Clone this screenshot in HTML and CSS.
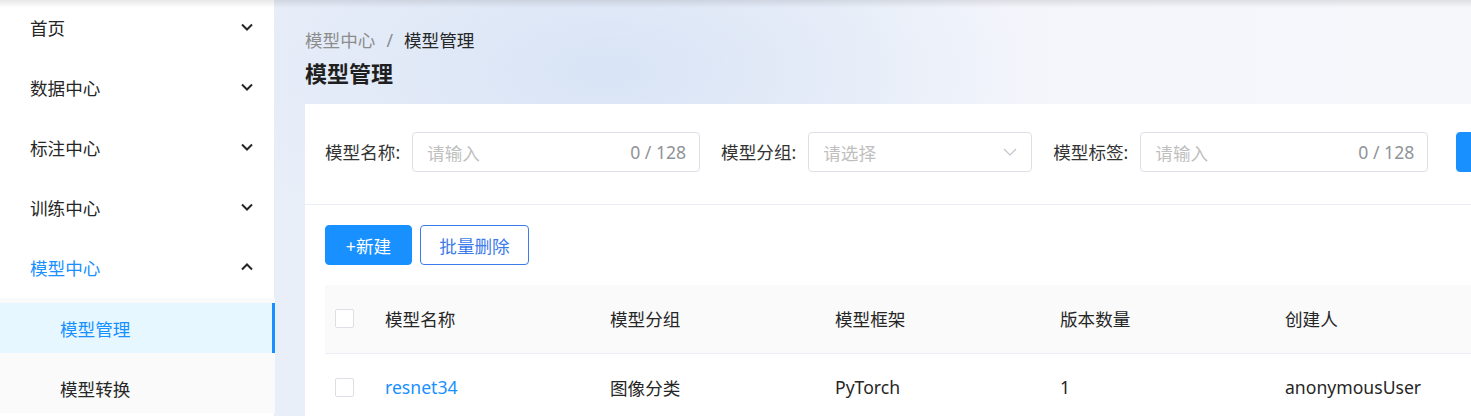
FILE: index.html
```html
<!DOCTYPE html>
<html lang="zh-CN">
<head>
<meta charset="utf-8">
<title>模型管理</title>
<link rel="stylesheet" href="styles.css">
</head>
<body>
<div class="topshadow"></div>
<div class="layout">
  <aside class="sider">
    <ul class="menu">
      <li class="menu-item"><span>首页</span><svg class="chev" viewBox="0 0 12 8"><path d="M1 1.5 6 6.5 11 1.5"/></svg></li>
      <li class="menu-item"><span>数据中心</span><svg class="chev" viewBox="0 0 12 8"><path d="M1 1.5 6 6.5 11 1.5"/></svg></li>
      <li class="menu-item"><span>标注中心</span><svg class="chev" viewBox="0 0 12 8"><path d="M1 1.5 6 6.5 11 1.5"/></svg></li>
      <li class="menu-item"><span>训练中心</span><svg class="chev" viewBox="0 0 12 8"><path d="M1 1.5 6 6.5 11 1.5"/></svg></li>
      <li class="menu-item open"><span>模型中心</span><svg class="chev" viewBox="0 0 12 8"><path d="M1 6.5 6 1.5 11 6.5"/></svg></li>
      <li class="submenu">
        <div class="sub-item active">模型管理</div>
        <div class="sub-item">模型转换</div>
      </li>
    </ul>
  </aside>
  <main class="main">
    <div class="breadcrumb"><span class="crumb-link">模型中心</span><span class="sep">/</span><span class="crumb-cur">模型管理</span></div>
    <h1 class="title">模型管理</h1>
    <section class="card">
      <div class="filters">
        <label class="flabel">模型名称:</label>
        <div class="input w288"><span class="ph">请输入</span><span class="count">0 / 128</span></div>
        <label class="flabel">模型分组:</label>
        <div class="input w224"><span class="ph">请选择</span><svg class="sel-arrow" viewBox="0 0 14 8"><path d="M1 1 7 7 13 1"/></svg></div>
        <label class="flabel">模型标签:</label>
        <div class="input w288"><span class="ph">请输入</span><span class="count">0 / 128</span></div>
        <button class="btn primary search" aria-label="查询"></button>
      </div>
      <div class="content">
        <div class="actions">
          <button class="btn primary new">+新建</button>
          <button class="btn outline">批量删除</button>
        </div>
        <table class="table">
          <thead>
            <tr>
              <th class="c-check"><span class="checkbox"></span></th>
              <th>模型名称</th>
              <th>模型分组</th>
              <th>模型框架</th>
              <th>版本数量</th>
              <th>创建人</th>
            </tr>
          </thead>
          <tbody>
            <tr>
              <td class="c-check"><span class="checkbox"></span></td>
              <td><a class="link">resnet34</a></td>
              <td>图像分类</td>
              <td>PyTorch</td>
              <td>1</td>
              <td>anonymousUser</td>
            </tr>
          </tbody>
        </table>
      </div>
    </section>
  </main>
</div>
</body>
</html>
```

FILE: styles.css
```css
* { box-sizing: border-box; }
html, body {
  margin: 0;
  padding: 0;
  width: 1471px;
  height: 416px;
  overflow: hidden;
  font-family: "Noto Sans", "Noto Sans CJK SC", sans-serif;
  font-size: 17.6px;
  color: #262626;
  background: #f5f7fb;
}
.topshadow {
  position: fixed;
  left: 0; top: 0; right: 0;
  height: 8px;
  background: linear-gradient(to bottom, rgba(0,0,0,0.09), rgba(0,0,0,0));
  z-index: 10;
  pointer-events: none;
}
.layout {
  display: flex;
  height: 416px;
}
.sider {
  flex: 0 0 275px;
  width: 275px;
  background: #fff;
  border-right: 1px solid #ececec;
  position: relative;
}
.menu {
  list-style: none;
  margin: -2px 0 0 0;
  padding: 0;
}
.menu-item {
  height: 60px;
  display: flex;
  align-items: center;
  justify-content: space-between;
  padding: 0 21px 0 30px;
  line-height: 26px;
  color: #262626;
}
.menu-item.open { color: #1890ff; }
.chev {
  width: 12px;
  height: 8px;
  fill: none;
  stroke: #262626;
  stroke-width: 2;
  margin-top: -2px;
}
.submenu {
  background: #fafafa;
  padding-top: 5px;
  margin-right: -1px;
}
.sub-item {
  height: 50px;
  margin-bottom: 10px;
  display: flex;
  align-items: center;
  padding-left: 60px;
  color: #262626;
  position: relative;
}
.sub-item.active {
  background: #e6f7ff;
  color: #1890ff;
}
.sub-item.active::after {
  content: "";
  position: absolute;
  right: 0;
  top: 0;
  bottom: 0;
  width: 3px;
  background: #1890ff;
}
.main {
  flex: 1 0 auto;
  min-width: 1250px;
  padding: 27px 0 0 30px;
  background:
    radial-gradient(ellipse 420px 200px at 330px 70px, rgba(214,226,245,0.9), rgba(214,226,245,0) 100%),
    linear-gradient(to right, #e9eff9 0%, #eef2fa 30%, #f4f6fb 60%, #f6f8fc 100%);
}
.breadcrumb {
  line-height: 26px;
  color: #262626;
}
.crumb-link { color: #8c8c8c; }
.sep { color: #8c8c8c; margin: 0 11px; }
.title {
  margin: 5px 0 0 0;
  font-size: 22px;
  font-weight: 700;
  line-height: 30px;
  color: #1f1f1f;
}
.card {
  margin-top: 16px;
  background: #fff;
  width: 1400px;
}
.filters {
  display: flex;
  align-items: center;
  padding: 28px 20px 32px 20px;
  border-bottom: 1px solid #ebeef5;
}
.flabel {
  color: #333;
  margin-right: 12px;
  line-height: 26px;
  white-space: nowrap;
}
.input {
  flex: 0 0 auto;
  height: 40px;
  border: 1px solid #dcdfe6;
  border-radius: 4px;
  display: flex;
  align-items: center;
  justify-content: space-between;
  padding: 0 13px 0 14px;
  margin-right: 21px;
}
.w288 { width: 288px; }
.w224 { width: 224px; padding-right: 13px; }
.ph { color: #bfbfbf; }
.count { color: #909399; }
.sel-arrow {
  width: 14px;
  height: 8px;
  fill: none;
  stroke: #c0c4cc;
  stroke-width: 1.2;
  margin-right: 1px;
}
.btn {
  height: 40px;
  border-radius: 4px;
  font-family: inherit;
  font-size: 17.6px;
  padding: 0 20px;
  cursor: pointer;
}
.primary {
  background: #1890ff;
  border: 1px solid #1890ff;
  color: #fff;
}
.search { flex: 0 0 88px; margin-left: 7px; width: 88px; }
.content { padding: 20px 20px 0 20px; }
.actions {
  display: flex;
  gap: 8px;
}
.new { width: 87px; padding: 0; }
.outline {
  background: #fff;
  border: 1px solid #3e7bea;
  color: #3e7bea;
  width: 109px;
  padding: 0;
}
.table {
  margin-top: 20px;
  border-collapse: collapse;
  table-layout: fixed;
  width: 1175px;
}
.table th, .table td {
  height: 68px;
  text-align: left;
  font-weight: 400;
  color: #262626;
  padding: 0 0 0 10px;
  width: 225px;
  border-bottom: 1px solid #ebeef5;
  white-space: nowrap;
}
.table th { background: #fafafa; }
.table .c-check { width: 50px; }
.checkbox {
  display: block;
  width: 19px;
  height: 19px;
  border: 1px solid #dcdfe6;
  border-radius: 2px;
  background: #fff;
}
.link { color: #1890ff; }
```
